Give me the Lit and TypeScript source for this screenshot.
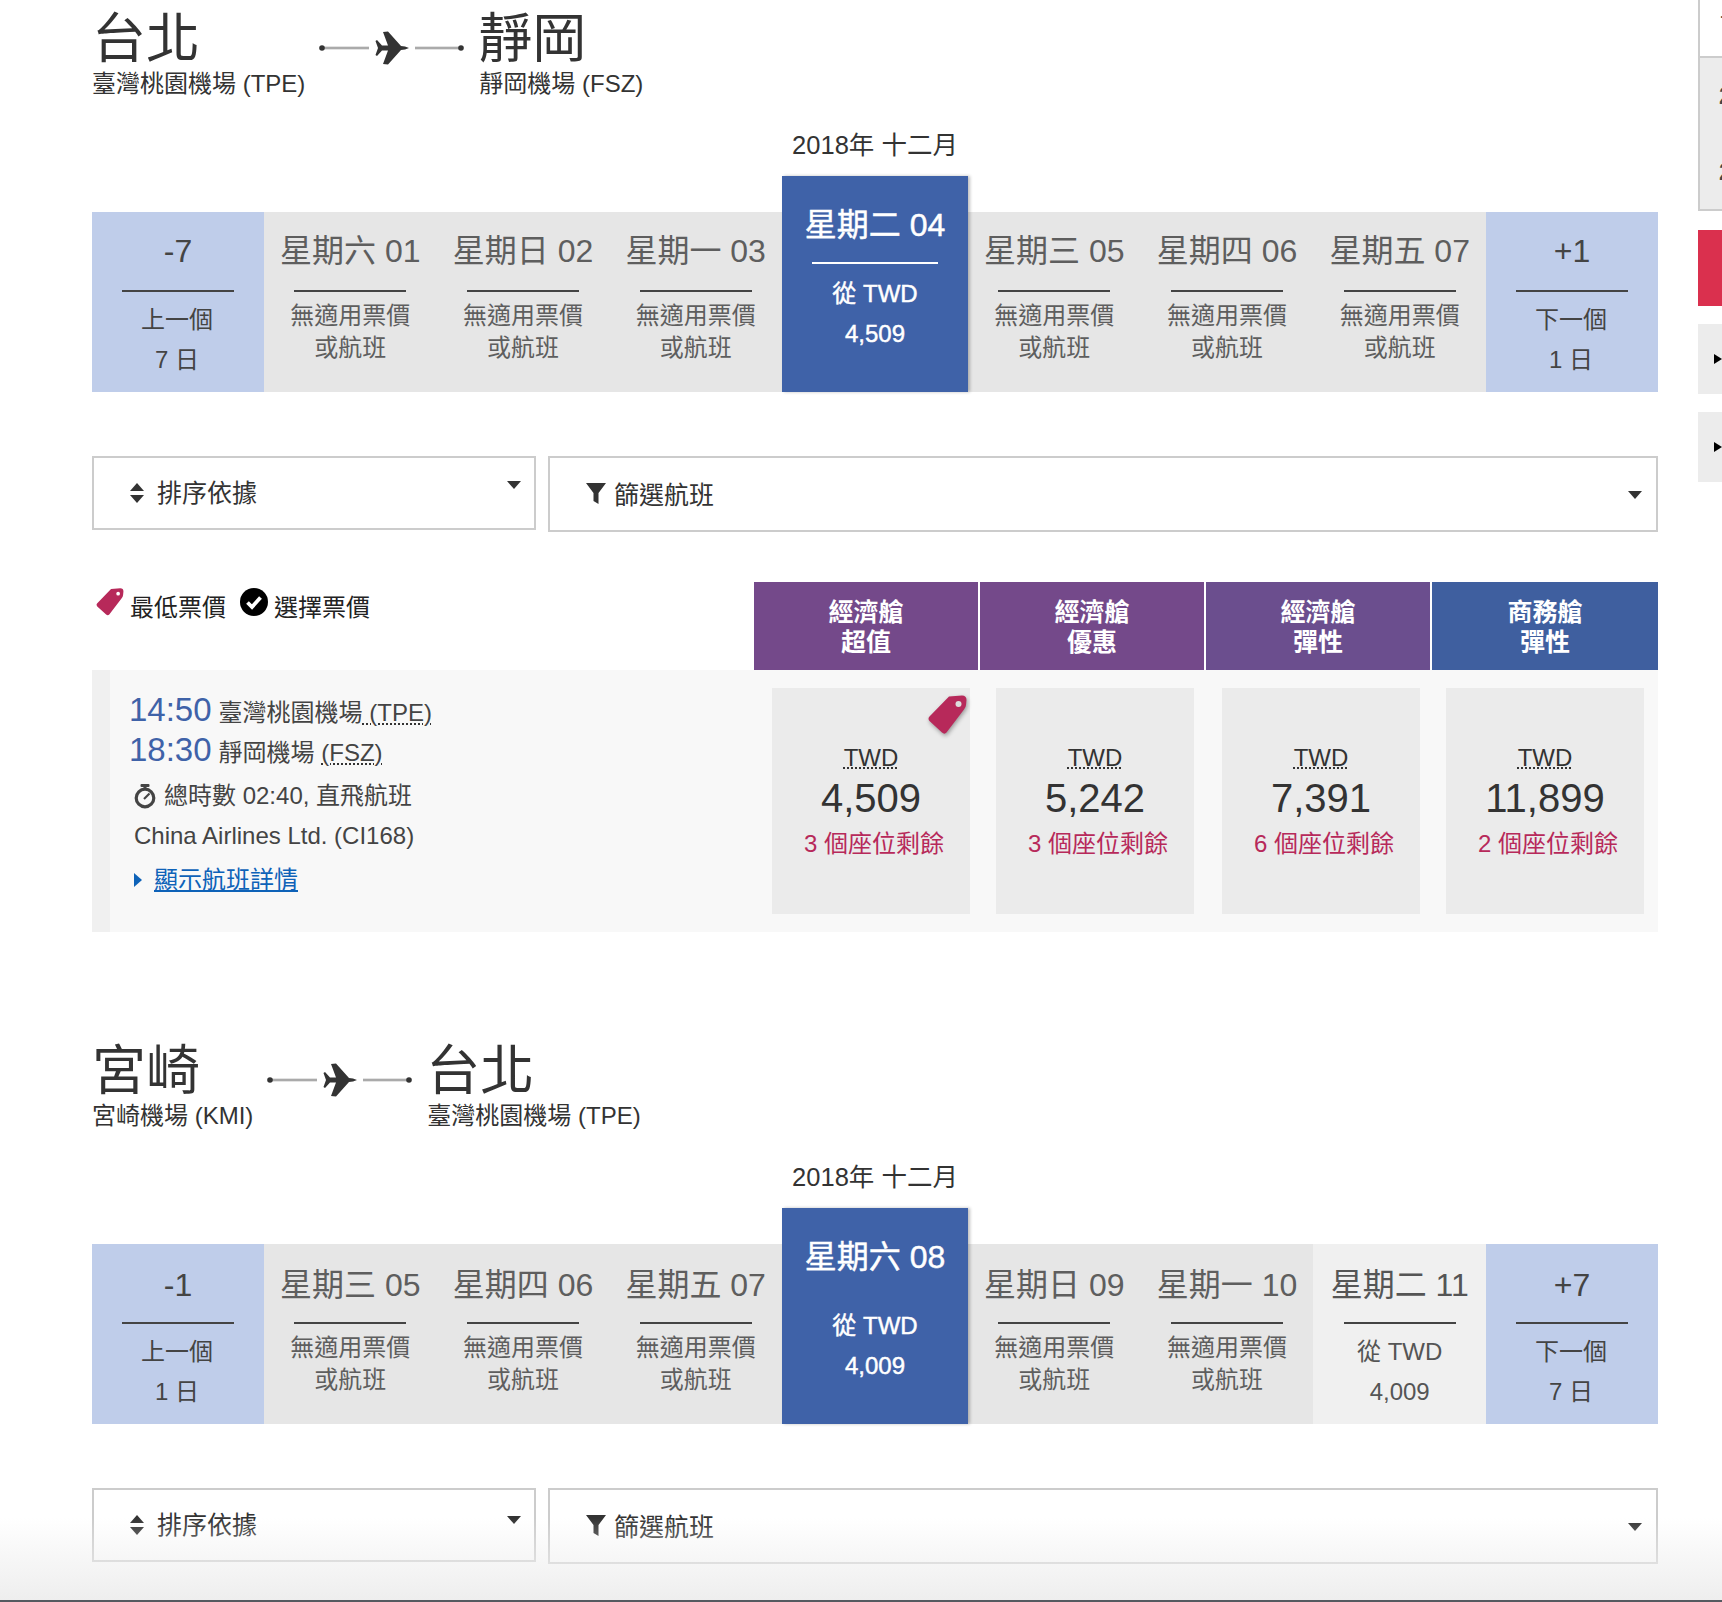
import { LitElement, html, css, svg } from "lit";
import { customElement } from "lit/decorators.js";

type Cell = { title: string; kind: "na" | "sel" | "fare"; price?: string };
type Sec = {
  from: string; fromSub: string; to: string; toSub: string;
  prev: [string, string, string]; next: [string, string, string];
  cells: Cell[]; rule: boolean;
};

const plane = svg`<path d="M34 17 Q30 15.2 26 15 L13 .5 L8 1 L13 14.5 L7 14.5 L2 9 L.5 10 L3 17 L.5 24 L2 25 L7 19.5 L13 19.5 L8 33 L13 33.5 L26 19 Q30 18.8 34 17 Z"/>`;
const tagPath = svg`<path d="M21 1.5 L34 .5 Q38.5 .5 38.5 5 L38 10 Q37.8 12.5 36 14.5 L18.5 37.5 Q16.5 39.8 14 37.5 L1.5 26 Q-.5 23.5 1.5 21.5 Z"/>`;

const secs: Sec[] = [
  {
    from: "台北", fromSub: "臺灣桃園機場 (TPE)", to: "靜岡", toSub: "靜岡機場 (FSZ)",
    prev: ["-7", "上一個", "7 日"], next: ["+1", "下一個", "1 日"], rule: true,
    cells: [
      { title: "星期六 01", kind: "na" }, { title: "星期日 02", kind: "na" }, { title: "星期一 03", kind: "na" },
      { title: "星期二 04", kind: "sel", price: "4,509" },
      { title: "星期三 05", kind: "na" }, { title: "星期四 06", kind: "na" }, { title: "星期五 07", kind: "na" },
    ],
  },
  {
    from: "宮崎", fromSub: "宮崎機場 (KMI)", to: "台北", toSub: "臺灣桃園機場 (TPE)",
    prev: ["-1", "上一個", "1 日"], next: ["+7", "下一個", "7 日"], rule: false,
    cells: [
      { title: "星期三 05", kind: "na" }, { title: "星期四 06", kind: "na" }, { title: "星期五 07", kind: "na" },
      { title: "星期六 08", kind: "sel", price: "4,009" },
      { title: "星期日 09", kind: "na" }, { title: "星期一 10", kind: "na" },
      { title: "星期二 11", kind: "fare", price: "4,009" },
    ],
  },
];

const fares = [
  { price: "4,509", seats: "3 個座位剩餘", low: true },
  { price: "5,242", seats: "3 個座位剩餘", low: false },
  { price: "7,391", seats: "6 個座位剩餘", low: false },
  { price: "11,899", seats: "2 個座位剩餘", low: false },
];

const heads = [
  { a: "經濟艙", b: "超值", c: "h1" },
  { a: "經濟艙", b: "優惠", c: "h1" },
  { a: "經濟艙", b: "彈性", c: "h2" },
  { a: "商務艙", b: "彈性", c: "h3" },
];

@customElement("app-root")
export class AppRoot extends LitElement {
  static styles = css`
    :host {
      display: block; position: relative; width: 1722px; height: 1602px; overflow: hidden;
      background: #fff; color: #333;
      font-family: "Liberation Sans", "Noto Sans CJK TC", sans-serif; font-size: 24px;
    }
    .page { display: flex; padding-left: 92px; }
    main { width: 1566px; padding-top: 7px; flex: none; }
    section + section { margin-top: 107px; }

    .route { display: flex; align-items: flex-start; }
    .place { flex: none; }
    .place .city { font-size: 54px; line-height: 62px; margin: 1px 0 -1px; color: #333; }
    .place.dest .city { margin-left: -1px; }
    .place .sub { font-size: 24px; line-height: 30px; color: #333; }
    .arrow { flex: none; width: 146px; height: 40px; margin: 21px 14px 0 14px; display: block; }
    .month { text-align: center; font-size: 25.5px; line-height: 30px; margin-top: 31px; color: #333; }

    .strip { display: flex; align-items: flex-end; height: 216px; margin-top: 16px; }
    .cell { flex: 1 1 0; height: 180px; background: #e6e6e6; text-align: center; color: #5e5e5e; padding-top: 19px; box-sizing: border-box; }
    .later .cell { padding-top: 21px; }
    .cell .t { font-size: 32px; line-height: 40px; white-space: nowrap; }
    .cell hr { width: 112px; height: 2px; border: 0; margin: 19px auto 0; background: #444; }
    .later .cell hr { margin-top: 17px; }
    .cell .s { line-height: 32px; margin-top: 8px; }
    .cell .s2 { line-height: 39.5px; margin-top: 8px; color: #555; }
    .cell.nav { flex: 0 0 172px; background: #bfcdea; color: #444; }
    .cell.nav .s2 { color: #444; padding-right: 2px; }
    .cell.fare { background: #f0f0f0; color: #555; }
    .cell.sel, .later .cell.sel {
      flex: 0 0 186px; height: 216px; background: #3f62a8; color: #fff; padding-top: 29px;
      box-shadow: 2px 0 3px rgba(0,0,0,.25); position: relative; -webkit-text-stroke: .45px #fff;
    }
    .cell.sel hr, .later .cell.sel hr { width: 126px; margin-top: 17px; background: #fff; }
    .cell.sel hr.off { background: transparent; }
    .cell.sel .s2 { color: #fff; margin-top: 10px; line-height: 40px; }

    .filters { display: flex; gap: 12px; margin-top: 64px; align-items: flex-start; }
    .dd { border: 2px solid #ccc; box-sizing: border-box; position: relative; display: flex; align-items: center; }
    .dd.sort { width: 444px; height: 74px; padding-left: 35px; gap: 12px; }
    .dd.filter { flex: 1; height: 76px; padding-left: 36px; gap: 8px; }
    .caret { position: absolute; width: 0; height: 0; border-left: 7px solid transparent; border-right: 7px solid transparent; border-top: 8px solid #333; }
    .sort .caret { right: 13px; top: 23px; }
    .later .sort .caret { top: 26px; }
    .filter .caret { right: 14px; top: 33px; }
    .dd span { font-size: 25px; line-height: 30px; color: #333; }
    .filter span { margin-top: 2px; }

    .heads { display: flex; gap: 2px; margin-top: 50px; height: 88px; }
    .legend { flex: 1; display: flex; align-items: flex-start; padding: 6px 0 0 4px; }
    .legend span { line-height: 30px; margin-top: 5px; color: #222; }
    .legend svg { flex: none; }
    .legend .l1 { margin-left: 6px; }
    .legend .l2 { margin-left: 14px; margin-right: 6px; }
    .head { flex: none; width: 224px; color: #fff; text-align: center; font-weight: 700; font-size: 25px; line-height: 30px; padding-top: 15px; box-sizing: border-box; }
    .head:last-child { width: 226px; }
    .h1 { background: #74498a; }
    .h2 { background: #6b4e8e; }
    .h3 { background: #3f5f9f; }

    .row { display: flex; background: #f8f8f8; border-left: 18px solid #f0f0f0; height: 262px; box-sizing: border-box; padding: 18px 0; position: relative; }
    .info { flex: none; width: 662px; padding: 2px 0 0 19px; box-sizing: border-box; }
    .ln { line-height: 40px; height: 40px; white-space: nowrap; color: #444; }
    .ln b { font-weight: 400; font-size: 33px; line-height: 40px; color: #3f62a8; margin-right: 7px; }
    .dot { text-decoration: underline dotted 1.5px #333; text-underline-offset: 2px; }
    .ind { padding-left: 5px; }
    .dur { display: flex; align-items: center; gap: 8px; margin-top: 6px; }
    .air { margin-top: 0; }
    .more { display: flex; align-items: center; gap: 12px; margin-top: 4px; }
    .more i { width: 0; height: 0; border-left: 8px solid #0e62b8; border-top: 7px solid transparent; border-bottom: 7px solid transparent; }
    .more a { color: #0e62b8; text-decoration: underline; text-underline-offset: 2px; }
    .boxes { display: flex; gap: 26px; }
    .box { flex: none; width: 198px; height: 226px; background: #ebebeb; text-align: center; padding-top: 55px; box-sizing: border-box; position: relative; }
    .box:nth-child(3) { margin-left: 2px; }
    .box .cur { line-height: 30px; color: #333; text-decoration: underline dotted 2px #333; text-underline-offset: 1px; }
    .box .p { font-size: 40px; line-height: 40px; margin-top: 5px; color: #333; }
    .box .seat { color: #b7295a; line-height: 30px; margin-top: 11px; padding-left: 6px; white-space: nowrap; }
    .box .tag { position: absolute; right: 3px; top: 7px; filter: drop-shadow(1px 2px 2px rgba(0,0,0,.35)); }

    aside { margin-left: 40px; width: 24px; flex: none; }
    .s-top { height: 56px; border-left: 2px solid #ccc; box-sizing: border-box; background: #fff; line-height: 30px; padding-left: 20px; color: #444; white-space: nowrap; overflow: hidden; }
    .s-grey { height: 155px; background: #ececec; border: 2px solid #ccc; border-right: 0; box-sizing: border-box; font-weight: 700; color: #444; line-height: 76px; padding-left: 19px; overflow: hidden; white-space: nowrap; font-size: 24px; }
    .s-red { height: 76px; background: #da304e; margin-top: 19px; }
    .s-btn { height: 70px; background: #ececec; margin-top: 18px; display: flex; align-items: center; padding-left: 16px; box-sizing: border-box; }
    .s-btn i { width: 0; height: 0; border-left: 8px solid #000; border-top: 5.5px solid transparent; border-bottom: 5.5px solid transparent; }

    .fade { position: absolute; left: 0; right: 0; bottom: 2px; height: 82px; background: linear-gradient(to bottom, rgba(238,238,238,0), #eee); pointer-events: none; }
    .bar { position: absolute; left: 0; right: 0; bottom: 0; height: 2px; background: #555a60; }
  `;

  private arrow() {
    return html`<svg class="arrow" viewBox="0 0 146 40" aria-hidden="true">
      <rect x="3" y="18.5" width="47" height="3" fill="#c8c8c8"></rect>
      <rect x="3" y="19.5" width="47" height="1" fill="#8c8c8c"></rect>
      <circle cx="3" cy="20" r="2.8" fill="#333"></circle>
      <g fill="#333" transform="translate(56 3)">${plane}</g>
      <rect x="96" y="18.5" width="46" height="3" fill="#c8c8c8"></rect>
      <rect x="96" y="19.5" width="46" height="1" fill="#8c8c8c"></rect>
      <circle cx="142" cy="20" r="2.8" fill="#333"></circle>
    </svg>`;
  }

  private dateCell(c: Cell, rule: boolean) {
    if (c.kind === "na") {
      return html`<div class="cell"><div class="t">${c.title}</div><hr /><div class="s">無適用票價<br />或航班</div></div>`;
    }
    if (c.kind === "sel") {
      return html`<div class="cell sel"><div class="t">${c.title}</div><hr class=${rule ? "" : "off"} /><div class="s2">從 TWD<br />${c.price}</div></div>`;
    }
    return html`<div class="cell fare"><div class="t">${c.title}</div><hr /><div class="s2">從 TWD<br />${c.price}</div></div>`;
  }

  private nav(n: [string, string, string]) {
    return html`<div class="cell nav"><div class="t">${n[0]}</div><hr /><div class="s2">${n[1]}<br />${n[2]}</div></div>`;
  }

  private section(s: Sec, i: number) {
    return html`<section class=${i === 0 ? "" : "later"}>
      <div class="route">
        <div class="place"><div class="city">${s.from}</div><div class="sub">${s.fromSub}</div></div>
        ${this.arrow()}
        <div class="place dest"><div class="city">${s.to}</div><div class="sub">${s.toSub}</div></div>
      </div>
      <div class="month">2018年 十二月</div>
      <div class="strip">
        ${this.nav(s.prev)}
        ${s.cells.map((c) => this.dateCell(c, s.rule))}
        ${this.nav(s.next)}
      </div>
      <div class="filters">
        <div class="dd sort">
          <svg width="16" height="20" viewBox="0 0 16 20"><path d="M8 0 L15 8 H1 Z M1 12 H15 L8 20 Z" fill="#333"></path></svg>
          <span>排序依據</span><div class="caret"></div>
        </div>
        <div class="dd filter">
          <svg width="20" height="22" viewBox="0 0 20 22"><path d="M0 0 H20 L12.5 10 V21 L7.5 18 V10 Z" fill="#333"></path></svg>
          <span>篩選航班</span><div class="caret"></div>
        </div>
      </div>
      ${i === 0 ? this.flights() : ""}
    </section>`;
  }

  private flights() {
    return html`
      <div class="heads">
        <div class="legend">
          <svg width="28" height="29" viewBox="0 0 39 41"><g fill="#b7295a">${tagPath}</g><circle cx="31" cy="8" r="2.6" fill="#fff"></circle></svg>
          <span class="l1">最低票價</span>
          <svg class="l2" width="28" height="28" viewBox="0 0 28 28"><circle cx="14" cy="14" r="14" fill="#000"></circle><path d="M7.5 14.5 L12 19 L20.5 9.5" fill="none" stroke="#fff" stroke-width="3.8"></path></svg>
          <span>選擇票價</span>
        </div>
        ${heads.map((h) => html`<div class="head ${h.c}">${h.a}<br />${h.b}</div>`)}
      </div>
      <div class="row">
        <div class="info">
          <div class="ln"><b>14:50</b>臺灣桃園機場<span class="dot"> (TPE)</span></div>
          <div class="ln"><b>18:30</b>靜岡機場 <span class="dot">(FSZ)</span></div>
          <div class="ln dur ind">
            <svg width="22" height="25" viewBox="0 0 22 25"><circle cx="11" cy="14" r="8.8" fill="none" stroke="#444" stroke-width="3.2"></circle><rect x="6.5" y="0" width="9" height="3" rx="1" fill="#444"></rect><rect x="9.5" y="2" width="3" height="4" fill="#444"></rect><path d="M10 15 L15.5 9.5" stroke="#444" stroke-width="2.2"></path></svg>
            <span>總時數 02:40, 直飛航班</span>
          </div>
          <div class="ln air ind">China Airlines Ltd. (CI168)</div>
          <div class="ln more ind"><i></i><a>顯示航班詳情</a></div>
        </div>
        <div class="boxes">
          ${fares.map((f) => html`<div class="box">
            ${f.low ? html`<svg class="tag" width="39" height="41" viewBox="0 0 39 41"><g fill="#b7295a">${tagPath}</g><circle cx="30.5" cy="9" r="3" fill="#ddd"></circle></svg>` : ""}
            <div><span class="cur">TWD</span></div>
            <div class="p">${f.price}</div>
            <div class="seat">${f.seats}</div>
          </div>`)}
        </div>
      </div>`;
  }

  render() {
    return html`<div class="page">
        <main>${secs.map((s, i) => this.section(s, i))}</main>
        <aside>
          <div class="s-top">-</div>
          <div class="s-grey">2<br />2</div>
          <div class="s-red"></div>
          <div class="s-btn"><i></i></div>
          <div class="s-btn"><i></i></div>
        </aside>
      </div>
      <div class="fade"></div>
      <div class="bar"></div>`;
  }
}
